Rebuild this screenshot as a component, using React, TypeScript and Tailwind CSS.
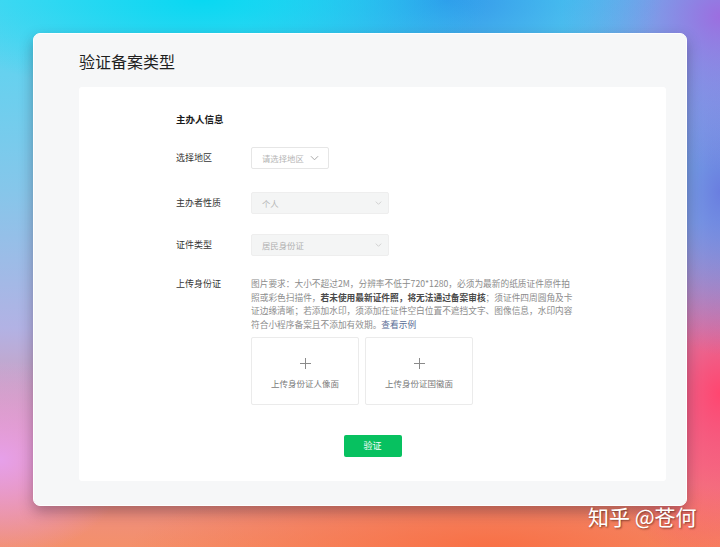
import React from "react";

const Chevron = ({ className }: { className?: string }) => (
  <svg viewBox="0 0 10 6" className={className} fill="none" stroke="currentColor" strokeWidth="1.1">
    <polyline points="1,1 5,5 9,1" />
  </svg>
);

export default function App() {
  return (
    <div className="relative w-[720px] h-[547px] overflow-hidden pt-[33px] pl-[33px] font-['Noto_Sans_CJK_SC','Noto_Sans',sans-serif] bg-[radial-gradient(ellipse_40%_18%_at_28%_0%,#08d8f2_0%,transparent_100%),radial-gradient(ellipse_30%_18%_at_62%_0%,#3496ea_0%,transparent_100%),radial-gradient(ellipse_22%_28%_at_100%_3%,#9c6ee0_0%,transparent_100%),radial-gradient(ellipse_12%_30%_at_100%_35%,#6a7ee0_0%,transparent_100%),radial-gradient(ellipse_18%_32%_at_100%_72%,#ff4670_0%,transparent_100%),radial-gradient(ellipse_18%_18%_at_0%_84%,#e6a0ea_0%,transparent_100%),radial-gradient(ellipse_50%_14%_at_68%_100%,#f87046_0%,transparent_100%),linear-gradient(180deg,#52d8f2_0%,#86c6ea_35%,#b2b2e4_60%,#e88c96_85%,#f4906a_100%)]">
      <div className="w-[654px] h-[473px] rounded-[7px] bg-[#f6f7f8] border border-white shadow-[0_6px_14px_rgba(40,20,40,0.35)] flex flex-col">
        <div className="h-[53px] flex items-center pl-[45px] text-[16px] leading-[22px] text-[#1f1f1f]">验证备案类型</div>
        <div className="ml-[45px] w-[587px] h-[394px] bg-white rounded-[3px] flex flex-col">
          <div className="pl-[97px] mt-[25px] h-[14px] leading-[14px] text-[9.5px] font-bold text-[#1a1a1a]">主办人信息</div>

          <div className="pl-[97px] mt-[21px] flex items-center h-[22px]">
            <div className="w-[75px] text-[9px] text-[#353535]">选择地区</div>
            <div className="w-[78px] h-[22px] border border-[#e6e6e6] rounded-[2px] bg-white flex items-center pl-[10px] gap-[6px] text-[8.4px] text-[#b5b5b5]">
              <span>请选择地区</span>
              <Chevron className="w-[9px] h-[6px] text-[#a8a8a8]" />
            </div>
          </div>

          <div className="pl-[97px] mt-[23px] flex items-center h-[22px]">
            <div className="w-[75px] text-[9px] text-[#353535]">主办者性质</div>
            <div className="w-[138px] h-[22px] border border-[#eeeeee] rounded-[2px] bg-[#f4f5f5] flex items-center justify-between pl-[10px] pr-[6px] text-[8.4px] text-[#b5b5b5]">
              <span>个人</span>
              <Chevron className="w-[7px] h-[4px] text-[#c4c4c4]" />
            </div>
          </div>

          <div className="pl-[97px] mt-[20px] flex items-center h-[22px]">
            <div className="w-[75px] text-[9px] text-[#353535]">证件类型</div>
            <div className="w-[138px] h-[22px] border border-[#eeeeee] rounded-[2px] bg-[#f4f5f5] flex items-center justify-between pl-[10px] pr-[6px] text-[8.4px] text-[#b0b0b0]">
              <span>居民身份证</span>
              <Chevron className="w-[7px] h-[4px] text-[#c4c4c4]" />
            </div>
          </div>

          <div className="pl-[97px] mt-[21px] flex">
            <div className="w-[75px] text-[9px] leading-[13.5px] text-[#353535]">上传身份证</div>
            <div className="flex flex-col">
              <div className="text-[8.7px] leading-[13.5px] text-[#8c8c8c] whitespace-nowrap">
                <div>图片要求：大小不超过2M，分辨率不低于720*1280，必须为最新的纸质证件原件拍</div>
                <div>
                  照或彩色扫描件，<span className="font-bold text-[#4a4a4a]">若未使用最新证件照，将无法通过备案审核</span>；须证件四周圆角及卡
                </div>
                <div>证边缘清晰；若添加水印，须添加在证件空白位置不遮挡文字、图像信息，水印内容</div>
                <div>
                  符合小程序备案且不添加有效期。<span className="text-[#576b95]">查看示例</span>
                </div>
              </div>
              <div className="mt-[6px] flex gap-[6px]">
                <div className="w-[108px] h-[68px] border border-[#ebebeb] rounded-[2px] flex flex-col items-center pt-[20px]">
                  <svg viewBox="0 0 11 11" className="w-[11px] h-[11px]" stroke="#8a8a8a" strokeWidth="1">
                    <line x1="5.5" y1="0" x2="5.5" y2="11" />
                    <line x1="0" y1="5.5" x2="11" y2="5.5" />
                  </svg>
                  <div className="mt-[8px] text-[8.5px] leading-[12px] text-[#7a7a7a]">上传身份证人像面</div>
                </div>
                <div className="w-[108px] h-[68px] border border-[#ebebeb] rounded-[2px] flex flex-col items-center pt-[20px]">
                  <svg viewBox="0 0 11 11" className="w-[11px] h-[11px]" stroke="#8a8a8a" strokeWidth="1">
                    <line x1="5.5" y1="0" x2="5.5" y2="11" />
                    <line x1="0" y1="5.5" x2="11" y2="5.5" />
                  </svg>
                  <div className="mt-[8px] text-[8.5px] leading-[12px] text-[#7a7a7a]">上传身份证国徽面</div>
                </div>
              </div>
            </div>
          </div>

          <div className="mt-[30px] flex justify-center">
            <div className="w-[58px] h-[22px] rounded-[2px] bg-[#07c160] flex items-center justify-center text-[9px] text-white">验证</div>
          </div>
        </div>
      </div>
      <div className="absolute left-[588px] top-[502px] text-[21px] leading-[28px] text-white [text-shadow:1px_1px_2px_rgba(60,20,10,0.6)]">知乎 @苍何</div>
    </div>
  );
}
